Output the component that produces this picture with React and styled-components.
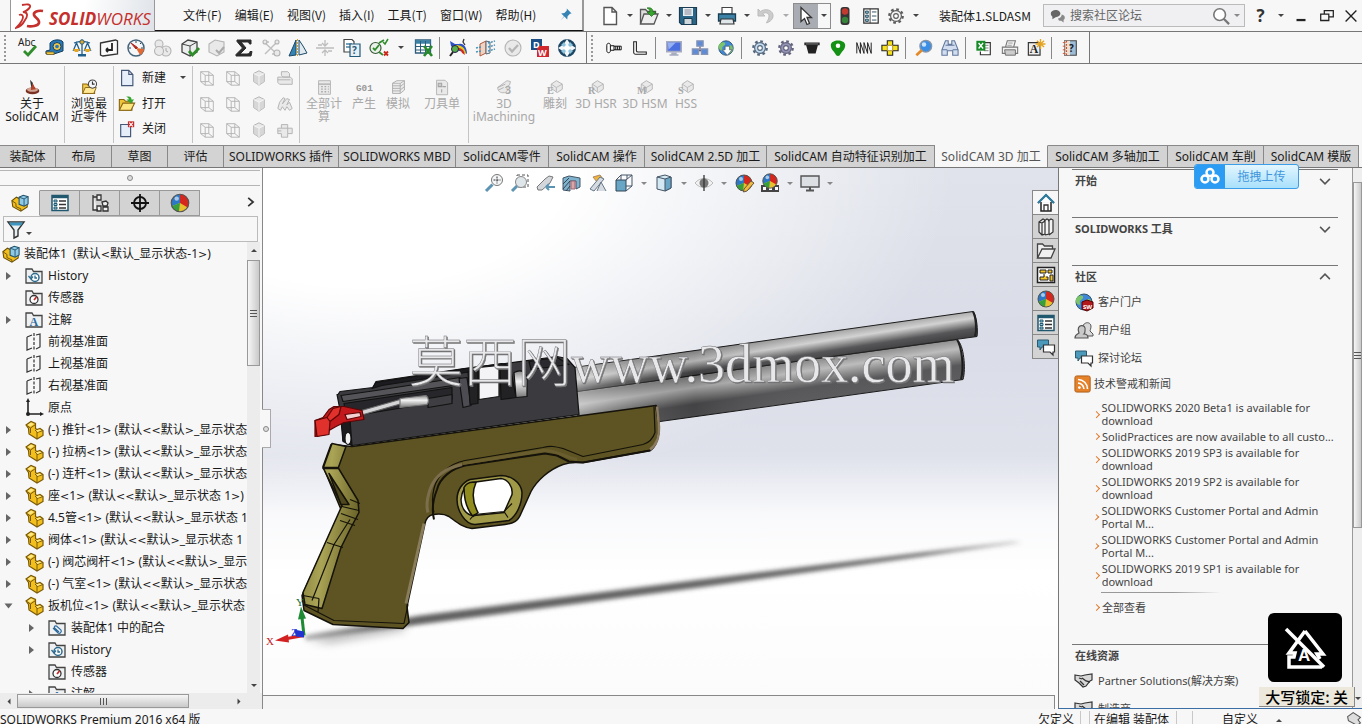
import React from 'react'
import styled, { createGlobalStyle } from 'styled-components'

const GlobalStyle = createGlobalStyle`
  * {
    box-sizing: border-box;
  }
  body {
    margin: 0;
    overflow: hidden;
    background: #f7f7f7;
    color: #1a1a1a;
    font: 12px/16px "Noto Sans", "Noto Sans CJK SC", sans-serif;
  }
  button, input {
    font: inherit;
    color: inherit;
    padding: 0;
    margin: 0;
    border: 0;
    background: none;
  }
  a {
    color: inherit;
    text-decoration: none;
  }
  ul {
    list-style: none;
    margin: 0;
    padding: 0;
  }
`

/* ---------- icons, all on a 20 x 20 grid ---------- */

const line = { fill: 'none', stroke: '#333', strokeWidth: 1.3 }
const grey = { fill: '#e9e9e9', stroke: '#b4b4b4', strokeWidth: 1.1 }

const ball = <>
  <circle cx="10" cy="10" r="8" fill="#e8bf2d" />
  <path d="M10 10V2a8 8 0 0 1 7 12Z" fill="#d4281e" />
  <path d="M10 10V2a8 8 0 0 0-7.500 11Z" fill="#2d78c4" />
  <path d="M10 10l-7.500 3A8 8 0 0 0 9 18Z" fill="#35a03c" />
  <circle cx="10" cy="10" r="8" fill="none" stroke="#555" />
  <circle cx="7" cy="6" r="2" fill="#fff" opacity=".6" />
</>

const folder = <path d="M2 17V3h6l1.500 2.500H18V17Z" fill="#eef0f1" stroke="#444" strokeWidth="1.300" />

const wireCube = <>
  <path d="M3 3h9v11H3ZM8 7h9v11H8ZM3 3l5 4M12 3l5 4M3 14l5 4M12 14l5 4" fill="none" stroke="#b0b0b0" />
</>

const solidCube = <>
  <path d="M10 2l6 3v9l-6 4-6-4V5Z" {...grey} />
  <path d="M4 5l6 3 6-3v9l-6 4-6-4Z" fill="#cfcfcf" opacity=".7" />
  <path d="M10 8v10M4 5l6 3 6-3" fill="none" stroke="#f7f7f7" />
</>

const part = <>
  <path d="M2 5l5-3.500 4.500 2v5l1.500 1 3-1 3 2v5l-6 3.500-8-5-.5-5.500Z" fill="#f2bf1c" stroke="#7a5a08" strokeWidth="1.200" />
  <path d="M2 5l4.500 3V13M6.500 8l5-3.500M11 10l2 2v6.500M13 12.500l6-2" fill="none" stroke="#7a5a08" />
  <path d="M3.500 5L7 2.500l3 1.500-3.500 2.500ZM12 10.500l3.500-1 2 1-4 1.500Z" fill="#ffe784" />
</>

const assembly = <>
  <path d="M1 7.500l5-4 4 2v5h8v4l-7 4.500-9-5Z" fill="#f2bf1c" stroke="#6b4f06" strokeWidth="1.200" />
  <path d="M1 7.500l4.500 3V14l5.500 2.500V19" fill="none" stroke="#6b4f06" />
  <path d="M9 3.500l4.500-2 5.500 1.500v8l-4.500 2.500-5.500-2Z" fill="#8ec9e6" stroke="#24536d" strokeWidth="1.200" />
  <path d="M9 3.500l5.500 2v8M14.500 5.500L19 3" fill="none" stroke="#24536d" />
</>

const chat = <>
  <path d="M1.500 3h11v7H6l-2 3v-3H1.500Z" fill="#4b9abb" stroke="#2b5b70" />
  <path d="M7.500 8h11v7H17v3l-3-3H7.500Z" fill="#fff" stroke="#333" strokeWidth="1.200" />
</>

const list = <>
  <path d="M2 2.500h16v15H2Z" fill="#fff" stroke="#20586f" strokeWidth="1.500" />
  <path d="M2 4h16" stroke="#20586f" strokeWidth="2.500" />
  <path d="M4 7h3v2H4ZM4 10.500h3v2H4ZM4 14h3v2H4Z" fill="#9bd0e3" stroke="#20586f" />
  <path d="M9 8h7M9 11.500h7M9 15h7" stroke="#333" strokeWidth="1.300" />
</>

const globe = <>
  <circle cx="10" cy="10" r="8" fill="#3f87d9" stroke="#356" />
  <path d="M5 4c3-1 5 0 4 2s-4 2-3 5-3 2-4-1 1-5 3-6ZM12 8c3-2 5-1 5.500 2s-2 6-4 6-2-3-3-4 0-3 1.500-4Z" fill="#7cc46b" />
</>

const handshake = <>
  <path d="M1 4l6 1 4-1 7-1v6l-2 1-4 5-3 1-4-4-4-3Z" fill="#d8d8d8" stroke="#333" strokeWidth="1.200" />
  <path d="M8 7l4 3 4 1M6 10l4 4M8 8L5 7" {...line} />
</>

const cog = (color, fill) => <>
  <circle cx="10" cy="10" r="7.500" fill="none" stroke={color} strokeWidth="2.500" strokeDasharray="3 2.890" />
  <circle cx="10" cy="10" r="6" fill={fill} stroke={color} strokeWidth="1.300" />
  <circle cx="10" cy="10" r="2.600" fill="#fff" stroke={color} strokeWidth="1.200" />
</>

const camOp = (letter) => <>
  <path d="M5 6l6-4 7 4v6l-6 4-4-3-3-1Z" {...grey} />
  <path d="M5 6l6 4 7-4M11 10v5" fill="none" stroke="#b4b4b4" />
  <text x="0" y="18" fontSize="12" fontWeight="bold" fontFamily="Liberation Serif" fill="#a8a8a8">{letter}</text>
</>

const icons = {
  part, assembly, chat, list, ball, wireCube, solidCube, globe, handshake,
  pin: <path d="M11 2l6 6-2 .5-3 3-.5 4-3.500-3.500L3 17l4.500-5.500L4 8l4-.5 3-3Z" fill="#3683b5" />,
  newDoc: <path d="M4 1.500h8l4.500 4.500v12.500H4ZM12 1.500V6h4.500" fill="#fff" stroke="#555" strokeWidth="1.400" />,
  openDoc: <>
    <path d="M1.500 18V3.500h5l2 2h8V9" fill="#ddd" stroke="#555" strokeWidth="1.300" />
    <path d="M1.500 18L5 8h14l-4 10Z" fill="#eee" stroke="#555" strokeWidth="1.300" />
    <path d="M8 2c4-1 6 1 6 4h3l-4.500 4.500L8 6h3c0-2-1-3-3-4Z" fill="#38a52f" stroke="#1f6d1a" strokeWidth=".7" />
  </>,
  save: <>
    <path d="M1.500 1.500h17v17h-15l-2-2Z" fill="#2b6688" stroke="#1b3d52" strokeWidth="1.200" />
    <path d="M5 2h10v8H5Z" fill="#e9eef1" />
    <path d="M6.500 4h7M6.500 6h7M6.500 8h7" stroke="#889" />
    <path d="M6 12.500h8v6H6Z" fill="#cfd8dd" stroke="#1b3d52" />
  </>,
  print: <>
    <path d="M5 1.500h10V8H5Z" fill="#fff" stroke="#444" strokeWidth="1.200" />
    <path d="M1.500 8h17v7h-17Z" fill="#3c82a6" stroke="#1b3d52" strokeWidth="1.300" />
    <path d="M4 13h12l1 5H3Z" fill="#dfe7eb" stroke="#333" strokeWidth="1.200" />
  </>,
  undo: <path d="M2 3v7h7l-2.500-2.500c4-2 8 0 6 5.500-1 2-2 3-2 4 6-2 8-7 5.500-10.500S8 3 4.500 5.500Z" fill="#ccc" stroke="#bbb" />,
  cursor: <path d="M5 1.500v14l3.500-3 2.500 6 2.500-1-2.500-6H15.500Z" fill="#fff" stroke="#333" strokeWidth="1.300" />,
  traffic: <>
    <rect x="5.500" y="1" width="9" height="18" rx="3" fill="#353535" />
    <circle cx="10" cy="5.500" r="3.200" fill="#c33a30" />
    <circle cx="10" cy="14" r="3.200" fill="#35843a" />
  </>,
  options: <>
    <path d="M2 2h16v16H2Z" fill="#fff" stroke="#333" strokeWidth="1.400" />
    <path d="M9 2v16" stroke="#333" />
    <path d="M4 4.500h3v2.500H4ZM4 9h3v2.500H4ZM4 13.500h3V16H4ZM11 5.500h5M11 10h5M11 14.500h5" fill="#8ec8de" stroke="#245" />
  </>,
  gear: cog('#5b5b5b', '#f4f4f4'),
  blueGear: cog('#55677d', '#c3dcf0'),
  darkGear: cog('#63637e', '#9494b4'),
  help: <text x="4" y="18" fontSize="20" fontWeight="bold" fill="#333" fontFamily="Open Sans">?</text>,
  minimize: <path d="M5 14.500h10" stroke="#222" strokeWidth="2.500" />,
  restore: <path d="M3 8h9v7H3ZM7 8V4h10v7h-5" fill="none" stroke="#222" strokeWidth="1.400" />,
  close: <path d="M4 4l12 12M16 4L4 16" stroke="#222" strokeWidth="1.500" />,
  search: <>
    <circle cx="8.500" cy="8.500" r="6.500" fill="#fff" stroke="#777" strokeWidth="1.800" />
    <path d="M13 13l6 6" stroke="#777" strokeWidth="2.500" />
  </>,
  bubbles: <>
    <path d="M1 7c0-3 3-4.500 6-4.500s6 2 6 4.500-3 4.500-6 4.500L3 14v-3C2 10 1 9 1 7Z" fill="#666" />
    <path d="M10 13c3-.5 5-3 4.500-5 3 .5 4 2 4 4s-1 2.500-1.500 3v3l-3-2c-2 .3-3.500-.5-4-3Z" fill="#888" />
  </>,
  spell: <>
    <text x="0" y="8" fontSize="10" fill="#222" fontFamily="Noto Sans">Abc</text>
    <path d="M6 13l4 4 8-9" fill="none" stroke="#2f8d2b" strokeWidth="2.800" />
  </>,
  tape: <>
    <path d="M5 5c3-4 11-4 13-1v9l-9 3H1v-3l4-1Z" fill="#2878b8" stroke="#17405f" />
    <circle cx="12" cy="8.500" r="4" fill="#f1c94b" stroke="#17405f" />
    <circle cx="12" cy="8.500" r="1.800" fill="#2878b8" />
    <path d="M1 14h8v2.500H2Z" fill="#f1c94b" stroke="#6b5310" strokeWidth=".7" />
  </>,
  scales: <>
    <path d="M10 1.500V16M2 5c5-2 11-2 16 0M4.500 5l-3 7h6ZM15.500 5l-3 7h6Z" fill="none" stroke="#1f5f8c" strokeWidth="1.300" />
    <path d="M1 11h7l-2 3H3ZM12 11h7l-2 3h-3Z" fill="#e4a623" />
    <path d="M6 16h8v2.500H6Z" fill="#1f5f8c" />
    <circle cx="10" cy="4" r="2.200" fill="#e4a623" stroke="#1f5f8c" />
  </>,
  section: <>
    <path d="M1.500 5l15-3 2 1v13L4 18l-2.500-1Z" fill="#fafafa" stroke="#333" strokeWidth="1.300" />
    <path d="M13 5v7H7m0 0l2-2M7 12l2 2" fill="none" stroke="#222" strokeWidth="1.800" />
  </>,
  gauge: <>
    <circle cx="10" cy="10" r="8" fill="#f4f6f8" stroke="#44637a" strokeWidth="1.500" />
    <path d="M10 10l4 7A8 8 0 0 0 18 11Z" fill="#e06a32" />
    <path d="M5 5l5 6 1.500-1.500Z" fill="#b3261c" stroke="#b3261c" />
    <path d="M10 3v2M3 10h2M15 10h2M15 5l-1 1" stroke="#345" />
  </>,
  dimGears: <>
    <circle cx="6" cy="6" r="4" {...grey} /><circle cx="13" cy="13" r="5" {...grey} />
    <circle cx="6" cy="13" r="4.500" {...grey} /><path d="M13 10v3l2 1" fill="none" stroke="#aaa" />
  </>,
  boxCheck: <>
    <path d="M2 6l6-4 9 2v10l-7 4-8-4Z" fill="#eceded" stroke="#444" strokeWidth="1.300" />
    <path d="M2 6l8 2 7-4M10 8v10" fill="none" stroke="#444" />
    <path d="M9 13l3.500 4L19 10" fill="none" stroke="#2f8d2b" strokeWidth="2.800" />
  </>,
  dimCheck: <>
    <path d="M2 6l6-4 9 2v10l-7 4-8-4Z" {...grey} />
    <path d="M9 12l3 3 5-6" fill="none" stroke="#aaa" strokeWidth="2" />
  </>,
  sigma: <path d="M3 2h14v4h-1.500c-.5-1.500-1-2-3-2H7l5 6-6 6h7c2 0 2.500-1 3-2.500H18L17 18H2v-1.500L8.500 10 3 3.500Z" fill="#2b2b2b" stroke="#2b2b2b" />,
  dimNodes: <>
    <path d="M3 4l13 12M16 4L4 16M3 4h5M16 16h-5" fill="none" stroke="#c0c0c0" strokeWidth="1.500" />
    <circle cx="4" cy="4" r="2" {...grey} /><circle cx="16" cy="4" r="2" {...grey} /><circle cx="16" cy="15" r="3" {...grey} />
  </>,
  mirror: <>
    <path d="M8 2v15l-7 1 4-9Z" fill="#3583b3" stroke="#1c4a68" />
    <path d="M11 2v15l8-2-4-7Z" fill="#dfe9ee" stroke="#1c4a68" />
    <path d="M9.500 1v18" stroke="#e0a020" strokeDasharray="2 1" />
  </>,
  dimAlign: <path d="M1 10h18M10 2v5M10 13v5M7 5l3 3 3-3M7 15l3-3 3 3M3 7h4M13 13h4" fill="none" stroke="#bdbdbd" strokeWidth="1.300" />,
  docCompare: <>
    <path d="M2 1.500h8l2 2V14H2Z" fill="#fff" stroke="#444" strokeWidth="1.200" />
    <path d="M4 6h6M4 9h6" stroke="#4c84a7" strokeWidth="1.500" />
    <path d="M8 6h10v12.500H8Z" fill="#e6eff4" stroke="#245a7a" strokeWidth="1.200" />
    <text x="10" y="16" fontSize="10" fontWeight="bold" fill="#245a7a">?</text>
  </>,
  network: <>
    <circle cx="6.500" cy="10" r="5.500" fill="#eaf2ea" stroke="#3b5a3b" strokeWidth="1.200" />
    <path d="M4 10l2 2 4-5M10 5l5-3M10 14l4 3" fill="none" stroke="#2f8d2b" strokeWidth="1.800" />
    <path d="M14 4l2 2 3-5" fill="none" stroke="#2f8d2b" strokeWidth="1.500" />
    <path d="M15 13.500l4 4M19 13.500l-4 4" stroke="#c9281c" strokeWidth="1.800" />
  </>,
  tableX: <>
    <path d="M1.500 2h15v13h-15Z" fill="#fff" stroke="#2c5d7d" strokeWidth="1.300" />
    <path d="M1.500 4h15" stroke="#3c82a6" strokeWidth="3.500" />
    <path d="M1.500 8.500h15M1.500 12h15M6.500 3v12M11.500 3v12" stroke="#2c5d7d" />
    <path d="M10 8l8 10M18 8l-8 10" stroke="#25892a" strokeWidth="2.600" />
  </>,
  rainbow: <>
    <path d="M1 3l5 3h4c5-1 8 4 8 10l-3-2-9-2-4-4Z" fill="#2d51c4" />
    <path d="M6 7c6 0 10 2 11 9l-3-2c-1-3-4-4-7-4Z" fill="#e4c81c" />
    <path d="M9 10c4 0 6 2 7 7l-3-2c-1-3-2-3-5-3Z" fill="#d4281e" />
    <path d="M15 1l-1 3 2 3" {...line} />
    <circle cx="6" cy="11" r="3.500" fill="#57ae4c" stroke="#224" /><path d="M4 14l-3 4" stroke="#222" strokeWidth="2" />
  </>,
  flow: <>
    <path d="M4 6l6-3v12l-6 3Z" fill="#f1d3c4" stroke="#b0583a" />
    <path d="M10 3l4 1v11l-4 1Z" fill="#e8ecef" stroke="#567" />
    <path d="M12 5l7-2M12 9l7-2M12 13l7-2M0 10l5-1M0 14l5-1" stroke="#4b93b5" strokeWidth="1.500" strokeDasharray="2 1" />
  </>,
  dimTick: <>
    <circle cx="10" cy="10" r="8" {...grey} />
    <path d="M6 10l3 3.500L15 7" fill="none" stroke="#b5b5b5" strokeWidth="2.200" />
  </>,
  dw: <>
    <path d="M1 1h11v11H1Z" fill="#1d4f86" />
    <path d="M7 8h12v11H7Z" fill="#d1282f" />
    <text x="3" y="9.500" fontSize="9" fontWeight="bold" fill="#fff">D</text>
    <text x="8" y="17.500" fontSize="9" fontWeight="bold" fill="#fff">W</text>
  </>,
  ring: <>
    <circle cx="10" cy="10" r="6.500" fill="#fff" stroke="#1d4663" strokeWidth="5" />
    <path d="M4 7l3-3 2 3-2 2ZM16 7l-3-3-2 3 2 2ZM4 13l3 3 2-3-2-2ZM16 13l-3 3-2-3 2-2Z" fill="#8cc3de" />
    <path d="M10 1l2.500 4L10 8 7.500 5ZM10 19l2.500-4L10 12l-2.500 3ZM1 10l4-2.500L8 10l-3 2.500ZM19 10l-4-2.500L12 10l3 2.500Z" fill="#f4f8fa" />
  </>,
  bolt: <path d="M2 7c0-3 4-3 4 0v6c0 3-4 3-4 0ZM6 7.500h4v5H6M10 8h8v4h-8M12 8v4M14 8v4M16 8v4" fill="#fff" stroke="#111" strokeWidth="1.100" />,
  corner: <path d="M3 3h3v10c0 1 1 1.500 2 1.500h9V17H5c-1 0-2-1-2-2Z" fill="#fff" stroke="#222" strokeWidth="1.200" />,
  monitor: <>
    <path d="M2 3h16v11H2Z" fill="#4c6fe0" stroke="#a6abc0" strokeWidth="1.800" />
    <path d="M3 4h9l-8 8Z" fill="#96b0f2" /><path d="M7 15h6v2h2v1.500H5V17h2Z" fill="#a6abc0" />
  </>,
  pcs: <>
    <path d="M10 8v5M5 13h10" stroke="#446" strokeWidth="1.200" />
    <path d="M6.500 2h7v6h-7ZM1.500 11h7v6h-7ZM11.500 11h7v6h-7Z" fill="#5f8ad6" stroke="#8795b4" strokeWidth="1.400" />
  </>,
  globeDown: <>{globe}<path d="M9 8h5v4h3l-5.500 6L6 12h3Z" fill="#fff" stroke="#456" strokeWidth=".8" /></>,
  bucket: <><path d="M1.500 4h17v3h-2l-2.500 9H6L3.500 7h-2Z" fill="#222" /><path d="M3 5.500h14" stroke="#888" /></>,
  cam: <><path d="M2 7c0-7 16-7 16 0 0 5-4 7-6 11-1 1-3 1-4 0-2-4-6-6-6-11Z" fill="#159215" /><circle cx="10" cy="7.500" r="2.500" fill="#fff" /></>,
  spring: <path d="M2 16V4l4 12V4l4 12V4l4 12V4l4 12V4" fill="none" stroke="#222" strokeWidth="1.100" />,
  plus: <><path d="M7 2h6v5h6v6h-6v5H7v-5H1V7h6Z" fill="#f6e21c" stroke="#222" strokeWidth="1.200" /><path d="M7 7h6v6H7Z" fill="#fff" stroke="#a5861c" /></>,
  lens: <><circle cx="12" cy="8" r="6.500" fill="#3c8ee4" stroke="#8895a5" strokeWidth="1.500" /><circle cx="10" cy="6" r="2.500" fill="#c8e4ff" /><path d="M7.500 12.500L1.500 18" stroke="#e38a28" strokeWidth="3" /></>,
  binoculars: <path d="M5 2h3v4h4V2h3l4 10v6h-6v-5H7v5H1v-6ZM5 7h10M1 12h6M13 12h6" fill="#d2deef" stroke="#61779c" strokeWidth="1.200" />,
  excel: <>
    <path d="M8 4h9v13.500H6V14" fill="#fff" stroke="#333" strokeWidth="1.300" />
    <path d="M10 7h5M10 10h5M10 13h5" stroke="#777" />
    <path d="M1.500 2h10v11h-10Z" fill="#178b27" /><path d="M4 4.500l5 6M9 4.500l-5 6" stroke="#fff" strokeWidth="1.500" />
  </>,
  printer: <>
    <path d="M5 9l2-7h9l-2 7M1.500 9h17v7h-17Z" fill="#f2f2f2" stroke="#777" strokeWidth="1.200" />
    <path d="M4 12h12v6H5Z" fill="#ccc" stroke="#666" /><path d="M8 4.500h5M7 7h5" stroke="#999" />
  </>,
  noteStar: <>
    <path d="M1.500 4h13v14h-13Z" fill="#eee" stroke="#333" strokeWidth="1.300" />
    <text x="3" y="16" fontSize="13" fontWeight="bold" fontFamily="Liberation Serif" fill="#222">A</text>
    <path d="M15 0v11M9.500 5.500h11M11 2l8 7M19 2l-8 7" stroke="#e4a420" strokeWidth="1.500" />
  </>,
  helpBook: <>
    <path d="M4 2h13v16H4Z" fill="#9fbcd6" stroke="#444" strokeWidth="1.200" />
    <path d="M4 2h6v16H4Z" fill="#eee1d7" /><path d="M6 2v16" stroke="#c94f2c" strokeWidth="1.500" strokeDasharray="2 1.500" />
    <text x="9" y="14" fontSize="11" fontWeight="bold" fill="#1a1a1a">?</text><path d="M2 4h3M2 8h3M2 12h3M2 16h3" stroke="#c94f2c" />
  </>,
  stamp: <>
    <ellipse cx="10" cy="14" rx="8" ry="4" fill="#7a2f20" /><ellipse cx="10" cy="12.500" rx="6.500" ry="2.500" fill="#d1a594" />
    <path d="M7 1l3 3 2 6-3 2Z" fill="#333" /><path d="M10 5l4 7-6 1Z" fill="#b3402a" />
  </>,
  recent: <>
    <path d="M2 17V6h5l2 2h7v9Z" fill="#f3cb4a" stroke="#8a6612" strokeWidth="1.200" />
    <path d="M2 17l3-7h13l-3 7Z" fill="#ffe794" stroke="#8a6612" strokeWidth="1.100" />
    <circle cx="13.500" cy="6" r="4.800" fill="#f4f6fa" stroke="#444" strokeWidth="1.200" /><path d="M13.500 3v3h2.500" {...line} />
  </>,
  page: <path d="M4 1.500h8l4.500 4.500v12.500H4ZM12 1.500V6h4.500" fill="#e6eefa" stroke="#46587a" strokeWidth="1.300" />,
  openYellow: <>
    <path d="M1.500 17V5h5l2 2h7v10Z" fill="#f0c437" stroke="#866512" strokeWidth="1.200" />
    <path d="M1.500 17l4-8h13l-4 8Z" fill="#ffe580" stroke="#866512" strokeWidth="1.200" />
    <path d="M9 2c4-1 6 0 6 3h3l-4 4.500L9.500 5H12c0-1.500-1-2-3-3Z" fill="#35a52f" />
  </>,
  closeDoc: <>
    <path d="M3 5h11v13.500H3Z" fill="#e6eefa" stroke="#46587a" strokeWidth="1.300" />
    <path d="M11 1.500h7V8h-7Z" fill="#c22b2b" /><path d="M12.500 3l4 4M16.500 3l-4 4" stroke="#fff" strokeWidth="1.300" />
  </>,
  calc: <><path d="M3 2h14v16H3Z" {...grey} /><path d="M3 6h14M6 9h2M10 9h2M14 9h1M6 12h2M10 12h2M14 12h1M6 15h2M10 15h2M14 15h1" stroke="#aaa" strokeWidth="1.500" /></>,
  g01: <text x="0" y="14" fontSize="11" fontWeight="bold" fontFamily="Liberation Mono" fill="#999">G01</text>,
  simulate: <path d="M3 5l5-3h9v11l-5 4H3ZM3 5h9l5-3M12 5v12M3 8h9M3 11h9M3 14h9M12 9l5-4M12 13l5-4" fill="#ececec" stroke="#a8a8a8" />,
  toolSheet: <><path d="M3 1.500h10l3 3v14H3Z" {...grey} /><path d="M5 5h4v4H5ZM10 9h4M9 12v4" fill="#ccc" stroke="#a5a5a5" strokeWidth="1.300" /></>,
  iMach: <>
    <path d="M2 10l8-6 3-2 4 1-1 4-5 3c3 0 4 5-1 6s-8-2-8-6Z" {...grey} />
    <path d="M2 10l9-4M3 13l6-3" stroke="#aaa" />
    <text x="11" y="18" fontSize="12" fontWeight="bold" fill="#aaa">3</text>
  </>,
  camE: camOp('E'), camR: camOp('R'), camM: camOp('M'), camS: camOp('S'),
  dimStack: <path d="M6 3h7l2 2v4H8L6 7ZM2 9h14l2 2v6H4l-2-2ZM2 12h14" {...grey} />,
  dimFins: <path d="M2 15l2-7 4-5 2 1-3 6 5-6 3 1-3 6 3-3 3 7-3 2-3-4-2 4-3-4-2 4Z" {...grey} />,
  dimPlus: <path d="M6 4h7v4h5v6h-5v4H6v-4H2V8h4ZM6 8h7v6M2 11h4" {...grey} />,
  treeConfig: <>
    <path d="M3 2v15h5M3 4h4M7 2h4v5H7ZM7 13h4v5H7ZM12 9l4-1 2 2-1 3-4 0ZM13 14h5v4h-5Z" fill="#eee" stroke="#333" strokeWidth="1.300" />
  </>,
  target: <><circle cx="10" cy="10" r="6" fill="none" stroke="#111" strokeWidth="1.800" /><path d="M10 1v18M1 10h18" stroke="#111" strokeWidth="1.800" /></>,
  funnel: <><path d="M2 3h16l-6 8v6l-4 2v-8Z" fill="#e8f0f4" stroke="#333" strokeWidth="1.400" /><path d="M3 3.500h14l-2 3H5Z" fill="#3e95bd" /></>,
  history: <>{folder}<circle cx="11" cy="11.500" r="4" fill="#fff" stroke="#2d6b8e" strokeWidth="1.500" /><path d="M11 9.500v2.500h2M4.500 10l2.500 3 2-2.500" fill="none" stroke="#2d6b8e" strokeWidth="1.300" /></>,
  sensor: <>{folder}<circle cx="10" cy="11.500" r="4" fill="#fff" stroke="#333" strokeWidth="1.300" /><path d="M10 12l2.500-3" stroke="#c22b2b" strokeWidth="1.800" /></>,
  notes: <>{folder}<text x="5.500" y="16" fontSize="12" fontWeight="bold" fontFamily="Liberation Serif" fill="#2d6b9e">A</text></>,
  mates: <>{folder}<path d="M6 10l5 5c2 1 4-1 3-3L9.500 8c-1.500-.5-2.500.5-2 2l4.500 4" fill="none" stroke="#2d6b9e" strokeWidth="1.200" /></>,
  plane: <><path d="M3 5l5-2M3 5v13l5-2M12 3l4-1v13l-4 2" fill="none" stroke="#333" strokeWidth="1.200" /><path d="M10 1v18" stroke="#333" strokeWidth="1.200" strokeDasharray="3 1.500" /></>,
  origin: <><path d="M4 3v13h13" fill="none" stroke="#222" strokeWidth="1.600" /><path d="M4 0l2 4h-4ZM20 16l-4-2v4Z" fill="#222" /><circle cx="4" cy="16" r="2" fill="#222" /></>,
  zoomFit: <><circle cx="13" cy="7" r="5.500" fill="#f4f6f8" stroke="#777" /><path d="M13 3.500v7M9.500 7h7" stroke="#333" strokeDasharray="2 1" /><path d="M8.500 11.500L2 18" stroke="#5d94b3" strokeWidth="3" /></>,
  zoomArea: <><path d="M7 2h11v12H7Z" fill="none" stroke="#555" strokeDasharray="3 2" /><circle cx="11" cy="9" r="5.500" fill="#dfe6ea" stroke="#888" /><path d="M7 13l-5 5" stroke="#5d94b3" strokeWidth="3" /></>,
  prevView: <><path d="M1 14l8-8 4-3 4 1-3 6-8 7-4 0Z" fill="#d3d6da" stroke="#777" /><path d="M10 14h9M10 14l3-3M10 14l3 3" stroke="#5b94b3" strokeWidth="2" fill="none" /></>,
  sectionView: <><path d="M1 5l6-2 11 2v9l-4 2V8H8v10l-7-1Z" fill="#7fb3cd" stroke="#456" /><path d="M1 11l6-6M1 16l7-8M4 18l4-5" stroke="#345" /><path d="M9 8h4v8H9Z" fill="#dba5a8" stroke="#967" /></>,
  sketchView: <><path d="M5 4l7-2 3 4-6 3Z" fill="#f1b43a" stroke="#a86" /><path d="M2 16L12 4l4 2L6 18ZM9 18l4-9 5 9" fill="#d5dbe0" stroke="#678" /></>,
  orient: <><path d="M2 7h10v11H2Z" fill="#69a6c6" stroke="#345" /><path d="M2 7l5-5h11v11l-6 5M12 7l6-5M7 2v5M12 13h6M13 2v4" fill="none" stroke="#456" /></>,
  display: <><path d="M3 4l8-2 6 2v11l-6 3-8-2Z" fill="#d3e8f2" stroke="#456" /><path d="M11 6v12l6-3V4Z" fill="#69a6c6" stroke="#456" /><path d="M3 4l8 2" stroke="#456" /></>,
  eye: <><path d="M1 10c5-6 13-6 18 0-5 6-13 6-18 0Z" fill="#f2f2f2" stroke="#bbb" /><circle cx="10" cy="10" r="4.500" fill="#777" /><path d="M10 2v16" stroke="#333" strokeWidth="1.300" /></>,
  paint: <>{ball}<path d="M10 16l7-8 3 2-7 8-3.500 1Z" fill="#f0ba3a" stroke="#654" /></>,
  scene: <><path d="M1 12h18v7H1Z" fill="#444" /><path d="M3 14h3v3H3ZM9 14h3v3H9ZM15 14h3v3h-3Z" fill="#fff" /><g transform="translate(1 -1) scale(.9)">{ball}</g></>,
  screen: <><path d="M1 3h18v11H1Z" fill="#dcdfe4" stroke="#555" strokeWidth="1.400" /><path d="M10 14v3M6 17.500h8" stroke="#555" strokeWidth="2" /></>,
  home: <><path d="M2 10l8-8 8 8M5 9v9h10V9" fill="#fff" stroke="#222" strokeWidth="1.500" /><path d="M2 10l8-8 8 8" fill="none" stroke="#2f7d9e" strokeWidth="2.200" /><path d="M8 18v-6h4v6" {...line} /></>,
  books: <path d="M3 5l4-3 2 1v14l-3 1-3-3ZM8 4l3-2 2 1v14l-4 1M12 4l3-2 2 1v12l-4 3M6 6v12M9 5v12M3 5l3 1 3-2M13 5v12" fill="#f2f2f2" stroke="#333" strokeWidth="1.200" />,
  folderOpen: <path d="M1.500 17V3h5l2 2h8v3M1.500 17L6 8h13l-4 9Z" fill="#f0f0f0" stroke="#444" strokeWidth="1.300" />,
  palette: <><path d="M1.500 2.500h17v15h-17Z" fill="#fff" stroke="#222" strokeWidth="1.500" /><path d="M4 5h6v3H4ZM12 5h4v3h-4ZM8 9v3H4v3h8v-3h-2M14 10h3v6h-3Z" fill="#f5c425" stroke="#222" /></>,
  portal: <>{globe}<path d="M8 10l5-2 6 2v6l-6 3-5-2Z" fill="#b3181c" stroke="#500" /><text x="9" y="17" fontSize="6" fontWeight="bold" fill="#fff">SW</text></>,
  people: <><path d="M9 9c-2-6 7-9 8-3 0 3-1 4-1 5l3 3v2h-8" fill="#d8d8d8" stroke="#555" /><path d="M1 18c0-4 3-4 4-5-4-9 8-10 6-2 0 1 0 2-1 3 2 0 4 1 4 4Z" fill="#c8c8c8" stroke="#555" strokeWidth="1.200" /></>,
  rss: <><rect x="1" y="1" width="17" height="18" rx="2" fill="#e5822a" stroke="#a95a17" /><circle cx="6" cy="14" r="1.500" fill="#fff" /><path d="M4.500 9a6.500 6.500 0 0 1 6.500 6.500M4.500 5a10.500 10.500 0 0 1 10.500 10.500" fill="none" stroke="#fff" strokeWidth="1.800" /></>,
  tag: <path d="M2 7l7-5 9 6-3 3 3 4-4 3-11-6Z" fill="#ddd" stroke="#555" strokeWidth="1.300" />,
}

const Glyph = styled.svg`
  display: block;
  flex: none;
  width: ${(p) => p.$size || 18}px;
  height: ${(p) => p.$size || 18}px;
  overflow: visible;
`

const Icon = ({ name, size }) => (
  <Glyph viewBox="0 0 20 20" $size={size} aria-hidden="true">{icons[name]}</Glyph>
)

const Caret = styled.span`
  display: block;
  flex: none;
  border: 3px solid transparent;
  border-top-color: ${(p) => p.$color || '#444'};
  border-bottom-width: 0;
`

/* ---------- shell ---------- */

const Page = styled.div`
  display: flex;
  flex-direction: column;
  height: 100vh;
  overflow: hidden;
`

const IconButton = styled.button`
  display: flex;
  flex: none;
  align-items: center;
  justify-content: center;
  width: ${(p) => p.$width || 24}px;
  height: 24px;
`

/* ---------- title bar ---------- */

const TitleBar = styled.header`
  display: flex;
  flex: none;
  align-items: center;
  height: 32px;
  padding-left: 10px;
  border-bottom: 1px solid #777;
`

const Brand = styled.div`
  display: flex;
  align-items: center;
  align-self: stretch;
  width: 145px;
  padding-left: 4px;
  gap: 4px;
  border: solid #999;
  border-width: 0 1px;
  background: linear-gradient(100deg, #fff 50%, #dfe3e8);
  color: #c5302c;
  font: italic 17px/20px "Open Sans", sans-serif;

  svg {
    flex: none;
    width: 30px;
    height: 28px;
  }
  span {
    padding-top: 6px;
  }
`

const MenuBar = styled.nav`
  display: flex;
  align-items: center;
  align-self: stretch;
  width: 429px;
  padding-left: 28px;
  gap: 13px;
  border-right: 2px solid #999;
  border-bottom: 1px solid #111;
  font-family: "Noto Sans CJK SC", sans-serif;

  ${IconButton} {
    margin: 0 auto;
  }
`

const QuickBar = styled.div`
  display: flex;
  align-items: center;
  padding-left: 14px;
`

const SelectTool = styled.div`
  display: flex;
  align-items: center;
  height: 26px;
  margin: 0 1px 0 0;
  border: 1px solid #8c8c8c;

  ${IconButton}:first-child {
    background: #a9adb3;
  }
`

const FileName = styled.h1`
  margin: 0;
  padding-left: 16px;
  font: 12px/16px "Noto Sans CJK SC", sans-serif;
`

const WindowTools = styled.div`
  display: flex;
  align-items: center;
  margin-left: auto;
`

const SearchBox = styled.form`
  display: flex;
  align-items: center;
  width: 202px;
  height: 23px;
  padding: 0 4px 0 6px;
  margin-right: 4px;
  gap: 4px;
  border: 1px solid #bbb;
  background: #f0f0f2;

  input {
    flex: 1;
    min-width: 0;
    outline: 0;
  }
  input::placeholder {
    color: #666;
    opacity: 1;
  }
`

const quick = [
  ['newDoc', '新建'], ['openDoc', '打开'], ['save', '保存'], ['print', '打印'], ['undo', '撤消'],
]

const TitleRow = () => (
  <TitleBar>
    <Brand>
      <svg viewBox="0 0 30 28" aria-hidden="true">
        <path d="M7 3c5-1 9-1 8 2-1 2-4 4-7 5 5 0 5 4 2 8-2 4-5 7-9 8 4-4 7-8 7-11 0-2-2-3-4-2" fill="none" stroke="#c5302c" strokeWidth="1.800" />
        <path d="M28 9c-5-1-10 1-9 4 1 3 6 4 5 8-1 3-8 4-12 3" fill="none" stroke="#c5302c" strokeWidth="2.600" />
      </svg>
      <span><b>SOLID</b>WORKS</span>
    </Brand>
    <MenuBar>
      {['文件(F)', '编辑(E)', '视图(V)', '插入(I)', '工具(T)', '窗口(W)', '帮助(H)'].map((m) => (
        <button key={m}>{m}</button>
      ))}
      <IconButton aria-label="固定菜单"><Icon name="pin" size={16} /></IconButton>
    </MenuBar>
    <QuickBar>
      {quick.map(([name, label]) => (
        <React.Fragment key={name}>
          <IconButton aria-label={label}><Icon name={name} size={20} /></IconButton>
          <IconButton $width={15} aria-label={label + '选项'}><Caret $color={name === 'undo' ? '#aaa' : '#444'} /></IconButton>
        </React.Fragment>
      ))}
      <SelectTool>
        <IconButton aria-label="选择"><Icon name="cursor" size={20} /></IconButton>
        <IconButton $width={12} aria-label="选择选项"><Caret /></IconButton>
      </SelectTool>
      <IconButton $width={26} aria-label="重建模型"><Icon name="traffic" size={20} /></IconButton>
      <IconButton $width={26} aria-label="文件属性"><Icon name="options" size={18} /></IconButton>
      <IconButton aria-label="选项"><Icon name="gear" size={18} /></IconButton>
      <IconButton $width={15} aria-label="更多选项"><Caret /></IconButton>
    </QuickBar>
    <FileName>装配体1.SLDASM</FileName>
    <WindowTools>
      <SearchBox>
        <Icon name="bubbles" size={16} />
        <input type="search" aria-label="搜索社区论坛" placeholder="搜索社区论坛" />
        <Icon name="search" size={18} />
        <Caret $color="#888" />
      </SearchBox>
      <IconButton aria-label="帮助"><Icon name="help" size={17} /></IconButton>
      <IconButton $width={15} aria-label="帮助选项"><Caret /></IconButton>
      <IconButton $width={26} aria-label="最小化"><Icon name="minimize" size={18} /></IconButton>
      <IconButton $width={26} aria-label="还原"><Icon name="restore" size={18} /></IconButton>
      <IconButton $width={22} aria-label="关闭"><Icon name="close" size={18} /></IconButton>
    </WindowTools>
  </TitleBar>
)

/* ---------- tool row ---------- */

const ToolRow = styled.div`
  display: flex;
  flex: none;
  height: 32px;
  border-bottom: 1px solid #777;
`

const ToolStrip = styled.div`
  display: flex;
  align-items: center;
  padding: 0 6px 0 4px;
  border-right: 1px solid #777;
`

const Grip = styled.span`
  width: 3px;
  height: 26px;
  margin-right: 7px;
  border-left: 2px dotted #999;
`

const Divider = styled.span`
  width: 1px;
  height: 22px;
  margin: 0 5px 0 2px;
  background: #888;
`

const stripOne = [
  'spell', 'tape', 'scales', 'section', 'gauge', 'dimGears', 'boxCheck', 'dimCheck', 'sigma', 'dimNodes',
  'mirror', 'dimAlign', 'docCompare', 'network', 'v', 'tableX', '|', 'rainbow', 'flow', 'dimTick', 'dw', 'ring',
]
const stripTwo = [
  'bolt', 'corner', '|', 'monitor', 'pcs', 'globeDown', '|', 'blueGear', 'darkGear', 'bucket', 'cam', 'spring',
  'plus', '|', 'lens', 'binoculars', '|', 'excel', 'printer', 'noteStar', '|', 'helpBook',
]

const Strip = ({ items, width, size }) => (
  <ToolStrip>
    <Grip />
    {items.map((name, i) => {
      if (name === '|') return <Divider key={i} />
      if (name === 'v') return <IconButton key={i} $width={18} aria-label="更多"><Caret /></IconButton>
      return <IconButton key={i} $width={width} aria-label={name}><Icon name={name} size={size} /></IconButton>
    })}
  </ToolStrip>
)

/* ---------- ribbon ---------- */

const Ribbon = styled.section`
  display: flex;
  flex: none;
  height: 81px;
  padding: 2px 0;
`

const Group = styled.div`
  display: flex;
  border-right: ${(p) => (p.$last ? 0 : 1)}px solid #c4c4c4;
`

const BigButton = styled.button`
  display: flex;
  flex-direction: column;
  align-items: center;
  width: ${(p) => p.$width}px;
  padding-top: 13px;
  gap: 1px;
  line-height: 13px;
  white-space: pre-line;
  color: ${(p) => (p.$dim ? '#a9a9a9' : '#1a1a1a')};
`

const FileGroup = styled(Group)`
  flex-direction: column;
  width: 79px;
  padding-left: 4px;
`

const FileButton = styled.button`
  display: flex;
  align-items: center;
  height: 26px;
  padding: 2px 6px 4px 0;
  gap: 6px;

  ${Caret} {
    margin-left: auto;
  }
`

const CubeGrid = styled(Group)`
  display: grid;
  grid-template-columns: repeat(4, 26px);
  grid-auto-rows: 26px;
  width: 107px;
  padding-left: 1px;

  ${IconButton} {
    width: 26px;
  }
`

const cubes = [
  'wireCube', 'wireCube', 'solidCube', 'dimStack',
  'wireCube', 'wireCube', 'solidCube', 'dimFins',
  'wireCube', 'wireCube', 'solidCube', 'dimPlus',
]
const jobs = [['全部计\n算', 'calc', 48], ['产生', 'g01', 32], ['模拟', 'simulate', 36], ['刀具单', 'toolSheet', 52]]
const machining = [
  ['3D\niMachining', 'iMach', 70], ['雕刻', 'camE', 32], ['3D HSR', 'camR', 50], ['3D HSM', 'camM', 48], ['HSS', 'camS', 34],
]

const Big = ({ item: [label, icon, width], dim }) => (
  <BigButton $width={width} $dim={dim} disabled={dim}>
    <Icon name={icon} size={17} />
    {label}
  </BigButton>
)

const RibbonRow = () => (
  <Ribbon>
    <Group><Big item={['关于\nSolidCAM', 'stamp', 64]} /></Group>
    <Group><Big item={['浏览最\n近零件', 'recent', 48]} /></Group>
    <FileGroup>
      <FileButton><Icon name="page" />新建<Caret /></FileButton>
      <FileButton><Icon name="openYellow" />打开</FileButton>
      <FileButton><Icon name="closeDoc" />关闭</FileButton>
    </FileGroup>
    <CubeGrid>
      {cubes.map((c, i) => <IconButton key={i} aria-label={'视图 ' + (i + 1)} disabled><Icon name={c} /></IconButton>)}
    </CubeGrid>
    <Group>{jobs.map((j) => <Big key={j[1]} item={j} dim />)}</Group>
    <Group $last>{machining.map((j) => <Big key={j[1]} item={j} dim />)}</Group>
  </Ribbon>
)

const TabBar = styled.nav`
  display: flex;
  flex: none;
  height: 23px;
  overflow: hidden;
  border-bottom: 1px solid #777;
`

const Tab = styled.button`
  flex: none;
  width: ${(p) => p.$width}px;
  border-top: 1px solid ${(p) => (p.$active ? '#f7f7f7' : '#888')};
  border-right: 1px solid #888;
  background: ${(p) => (p.$active ? '#f7f7f7' : '#d3d3d3')};
  color: ${(p) => (p.$active ? '#555' : '#1a1a1a')};
  white-space: nowrap;
`

const tabs = [
  ['装配体', 56], ['布局', 56], ['草图', 56], ['评估', 56], ['SOLIDWORKS 插件', 115], ['SOLIDWORKS MBD', 117],
  ['SolidCAM零件', 93], ['SolidCAM 操作', 96], ['SolidCAM 2.5D 加工', 122], ['SolidCAM 自动特征识别加工', 168],
  ['SolidCAM 3D 加工', 113], ['SolidCAM 多轴加工', 120], ['SolidCAM 车削', 96], ['SolidCAM 模版', 95],
]

/* ---------- feature tree ---------- */

const Main = styled.main`
  display: flex;
  flex: 1;
  min-height: 0;
`

const TreePanel = styled.aside`
  display: flex;
  flex: none;
  flex-direction: column;
  width: 263px;
  border-right: 1px solid #888;
`

const PanelHandle = styled.div`
  display: flex;
  align-items: center;
  justify-content: center;
  height: 16px;
  margin: 2px 2px 4px 0;
  border: solid #b5b5b5;
  border-width: 1px 0;
`

const Dot = styled.span`
  width: 6px;
  height: 6px;
  border: 1px solid #888;
  border-radius: 50%;
  background: #ddd;
`

const TreeTabs = styled.div`
  display: flex;
  height: 26px;
  padding-right: 5px;
`

const TreeTab = styled(IconButton)`
  width: 40px;
  height: 26px;
  border: 1px solid #999;
  border-width: 1px 1px 1px 0;
  background: #d3d3d3;

  &:first-child {
    border-color: #f7f7f7 #999 #f7f7f7 #f7f7f7;
    background: #f7f7f7;
  }
`

const Expand = styled(IconButton)`
  width: 12px;
  margin-left: auto;
`

const FilterBox = styled.button`
  display: flex;
  flex: none;
  align-items: center;
  height: 26px;
  margin: 0 4px 0 3px;
  padding-left: 2px;
  border: 1px solid #bbb;

  ${Caret} {
    margin-top: 8px;
  }
`

const TreeBody = styled.div`
  display: flex;
  flex: 1;
  min-height: 0;
`

const TreeList = styled.ul`
  flex: 1;
  padding-top: 1px;
  overflow: hidden;
`

const TreeItem = styled.li`
  display: flex;
  align-items: center;
  height: 22px;
  padding-left: ${(p) => [2, 6, 29][p.$level]}px;
`

const Arrow = styled.span`
  flex: none;
  width: 18px;
  height: 8px;

  &::before {
    content: '';
    display: ${(p) => (p.$state ? 'block' : 'none')};
    width: 0;
    border: 4px solid transparent;
    border-left: 5px solid #666;
    border-right-width: 0;
    transform: ${(p) => (p.$state === 'open' ? 'rotate(90deg)' : 'none')};
  }
`

const TreeLabel = styled.button`
  display: flex;
  align-items: center;
  gap: 4px;
  white-space: pre;
`

const Angle = styled.span`
  font-family: "DejaVu Sans", sans-serif;
  font-size: 11px;
`

const tree = [
  [0, '', 'assembly', '装配体1  (默认<默认_显示状态-1>)'],
  [1, 'closed', 'history', 'History'],
  [1, '', 'sensor', '传感器'],
  [1, 'closed', 'notes', '注解'],
  [1, '', 'plane', '前视基准面'],
  [1, '', 'plane', '上视基准面'],
  [1, '', 'plane', '右视基准面'],
  [1, '', 'origin', '原点'],
  [1, 'closed', 'part', '(-) 推针<1> (默认<<默认>_显示状态'],
  [1, 'closed', 'part', '(-) 拉柄<1> (默认<<默认>_显示状态'],
  [1, 'closed', 'part', '(-) 连杆<1> (默认<<默认>_显示状态'],
  [1, 'closed', 'part', '座<1> (默认<<默认>_显示状态 1>)'],
  [1, 'closed', 'part', '4.5管<1> (默认<<默认>_显示状态 1'],
  [1, 'closed', 'part', '阀体<1> (默认<<默认>_显示状态 1'],
  [1, 'closed', 'part', '(-) 阀芯阀杆<1> (默认<<默认>_显示'],
  [1, 'closed', 'part', '(-) 气室<1> (默认<<默认>_显示状态'],
  [1, 'open', 'part', '扳机位<1> (默认<<默认>_显示状态'],
  [2, 'closed', 'mates', '装配体1 中的配合'],
  [2, 'closed', 'history', 'History'],
  [2, '', 'sensor', '传感器'],
  [2, 'closed', 'notes', '注解'],
]

const ScrollY = styled.div`
  display: flex;
  flex: none;
  flex-direction: column;
  align-items: center;
  width: 13px;
  margin-right: 2px;
  padding: 7px 0 6px;
  background: #ececec;

  ${Caret}:first-child {
    transform: rotate(180deg);
  }
  ${Caret}:last-child {
    margin-top: auto;
  }
`

const ScrollX = styled.div`
  display: flex;
  flex: none;
  align-items: center;
  height: 16px;
  padding: 0 20px 0 6px;
  background: #ececec;

  ${Caret}:first-child {
    transform: rotate(90deg);
  }
  ${Caret}:last-child {
    margin-left: auto;
    transform: rotate(-90deg);
  }
`

const Thumb = styled.span`
  display: flex;
  flex: none;
  align-items: center;
  justify-content: center;
  width: ${(p) => (p.$across ? '172px' : '100%')};
  height: ${(p) => (p.$across ? '14px' : '106px')};
  margin: ${(p) => (p.$across ? '0 0 0 5px' : '8px 0 0')};
  border: 1px solid #999;
  background: linear-gradient(${(p) => (p.$across ? 180 : 90)}deg, #f6f6f6, #c9c9c9);

  &::before {
    content: '';
    width: 7px;
    height: 7px;
    background: repeating-linear-gradient(${(p) => (p.$across ? 90 : 180)}deg, #555 0 1px, transparent 1px 3px);
  }
`

const FeatureTree = () => (
  <TreePanel>
    <PanelHandle><Dot /></PanelHandle>
    <TreeTabs>
      <TreeTab aria-label="设计树"><Icon name="assembly" /></TreeTab>
      <TreeTab aria-label="属性"><Icon name="list" size={20} /></TreeTab>
      <TreeTab aria-label="配置"><Icon name="treeConfig" size={20} /></TreeTab>
      <TreeTab aria-label="尺寸专家"><Icon name="target" size={20} /></TreeTab>
      <TreeTab aria-label="外观"><Icon name="ball" size={22} /></TreeTab>
      <Expand aria-label="更多标签">
        <Glyph viewBox="0 0 20 20" $size={14}><path d="M6 4l7 6-7 6" fill="none" stroke="#333" strokeWidth="2.500" /></Glyph>
      </Expand>
    </TreeTabs>
    <FilterBox aria-label="过滤"><Icon name="funnel" size={20} /><Caret /></FilterBox>
    <TreeBody>
      <TreeList>
        {tree.map(([level, state, icon, label], i) => (
          <TreeItem key={i} $level={level}>
            {level > 0 && <Arrow $state={state} />}
            <TreeLabel>
              <Icon name={icon} size={level ? 20 : 18} />
              <span>{label.split(/([<>]+)/).map((s, k) => (k % 2 ? <Angle key={k}>{s}</Angle> : s))}</span>
            </TreeLabel>
          </TreeItem>
        ))}
      </TreeList>
      <ScrollY><Caret /><Thumb /><Caret /></ScrollY>
    </TreeBody>
    <ScrollX><Caret /><Thumb $across /><Caret /></ScrollX>
  </TreePanel>
)

/* ---------- graphics area ---------- */

const Viewport = styled.section`
  position: relative;
  display: flex;
  flex: 1;
  flex-direction: column;
  min-width: 0;
  background:
    linear-gradient(180deg, transparent 53%, rgba(255, 255, 255, 0.8) 64%, #fff 75%, #fbfbfc),
    radial-gradient(ellipse 75% 62% at 12% 0%, #fff 35%, transparent),
    linear-gradient(180deg, #e0e3eb, #dadde7 30%, #e0e2ec 60%);
`

const Scene = styled.svg`
  flex: 1;
  min-height: 0;
  width: 100%;
`

const BottomStrip = styled.div`
  flex: none;
  height: 14px;
  margin-right: 3px;
  border: solid #888;
  border-width: 1px 1px 0 0;
  background: #f5f5f6;
`

const HeadsUp = styled.div`
  position: absolute;
  top: 3px;
  left: 0;
  right: 4px;
  display: flex;
  justify-content: center;
`

const Splitter = styled.button`
  position: absolute;
  top: 241px;
  left: -1px;
  display: flex;
  align-items: center;
  justify-content: center;
  width: 9px;
  height: 39px;
  border: 1px solid #aaa;
  border-left: 0;
  background: #f7f7f7;
`

const TaskTabs = styled.div`
  position: absolute;
  top: 22px;
  right: 0;
  width: 26px;
  border: solid #888;
  border-width: 1px 0 0 1px;
`

const TaskTab = styled(IconButton)`
  width: 25px;
  border-bottom: 1px solid #888;
  background: #d3d3d3;

  &:first-child {
    background: #f7f7f7;
  }
`

const Watermark = styled.text`
  font-family: "Liberation Serif", serif;
  font-size: 54px;
  fill: #e8e8ea;
  stroke: #6b6b70;
  stroke-width: 0.4px;
  filter: drop-shadow(1px 1px 0 #777);

  tspan {
    font-family: "Noto Sans CJK SC", sans-serif;
    font-weight: 300;
  }
`

const headsUp = [
  ['zoomFit'], ['zoomArea'], ['prevView'], ['sectionView'], ['sketchView'], ['orient', 1],
  ['display', 1], ['eye', 1], ['paint'], ['scene', 1], ['screen', 1],
]

const Model = () => (
  <Scene viewBox="263 168 795 526" role="img" aria-label="装配体1">
    <defs>
      <linearGradient id="tubeA" gradientUnits="userSpaceOnUse" x1="780" y1="338" x2="784" y2="364">
        <stop offset="0" stopColor="#9a9a9a" /><stop offset=".35" stopColor="#d0d0d0" />
        <stop offset=".75" stopColor="#4d4c4e" /><stop offset="1" stopColor="#3a393b" />
      </linearGradient>
      <linearGradient id="tubeB" gradientUnits="userSpaceOnUse" x1="780" y1="364" x2="786" y2="405">
        <stop offset="0" stopColor="#858586" /><stop offset=".25" stopColor="#b9b9b9" />
        <stop offset=".65" stopColor="#4f4e50" /><stop offset="1" stopColor="#545356" />
      </linearGradient>
      <linearGradient id="shine" gradientUnits="userSpaceOnUse" x1="575" y1="0" x2="975" y2="0">
        <stop offset="0" stopColor="#fff" stopOpacity=".3" /><stop offset=".3" stopColor="#000" stopOpacity=".15" />
        <stop offset=".6" stopColor="#fff" stopOpacity=".05" /><stop offset="1" stopColor="#fff" stopOpacity=".05" />
      </linearGradient>
      <linearGradient id="bevel" x1="0" y1="0" x2="1" y2="0.300">
        <stop offset="0" stopColor="#7d7635" /><stop offset=".5" stopColor="#aaa456" /><stop offset="1" stopColor="#6e672c" />
      </linearGradient>
      <linearGradient id="bolt" x1="0" y1="0" x2="0" y2="1">
        <stop offset="0" stopColor="#888" /><stop offset=".4" stopColor="#f3f3f3" /><stop offset="1" stopColor="#777" />
      </linearGradient>
      <linearGradient id="ground" gradientUnits="userSpaceOnUse" x1="305" y1="0" x2="1030" y2="0">
        <stop offset="0" stopColor="#555" stopOpacity=".45" /><stop offset=".15" stopColor="#444" stopOpacity=".85" />
        <stop offset=".85" stopColor="#444" stopOpacity=".8" /><stop offset="1" stopColor="#555" stopOpacity=".25" />
      </linearGradient>
      <filter id="soft" x="-10%" y="-50%" width="120%" height="200%"><feGaussianBlur stdDeviation="2.200" /></filter>
      <filter id="softer" x="-30%" y="-80%" width="160%" height="260%"><feGaussianBlur stdDeviation="4" /></filter>
    </defs>

    {/* ground shadow */}
    <path d="M308 640l92-14 8 3-78 13Z" fill="#666" opacity=".6" filter="url(#softer)" />
    <path d="M304 635L420 615 700 579 1012 541 1022 542 700 587 420 624 306 640Z" fill="url(#ground)" filter="url(#soft)" />

    {/* barrel and reservoir */}
    <g stroke="#161616" strokeWidth="1">
      <path d="M576 391L957 339c7 5 9 30 6 40L660 421 578 416Z" fill="url(#tubeB)" />
      <path d="M574 367L973 311c4 4 5 20 4 25L577 391Z" fill="url(#tubeA)" />
      <path d="M957 339c5 8 7 28 4 40M973 311c3 6 4 18 2 25" fill="none" strokeWidth="2" />
      <path d="M574 367L973 311c4 4 5 20 4 25l-16 3 2 40L660 421l-82-6Z" fill="url(#shine)" stroke="none" />
    </g>

    {/* receiver */}
    <g stroke="#121212" strokeWidth="1.200" strokeLinejoin="round">
      <path d="M338 394l2-3 33-4 3-6 88-13 41-5 52-7 10 2 8 9 4 47-227 31-9-5-1-20-5-26Z" fill="#3b3a3e" />
      <path d="M376 382l90-14 36-5 6 2-36 6-90 14-10 3Z" fill="#1c1c20" />
      <path d="M341 395l35-5 84-13v7l-84 12-33 5Z" fill="#555458" />
      <path d="M344 403l108-16v12l-90 15-16 2Z" fill="#27262a" />
      <path d="M428 398l24-4v9l-24 4Z" fill="#3f3e42" />
      <path d="M358 411l42-12 2 4-42 12Z" fill="#d5d5d7" stroke="#666" />
      <path d="M400 398l26-3c3 2 3 7 1 9l-27 3Z" fill="url(#bolt)" stroke="#777" />
      <path d="M459 378l8-1 4 28-8 2Z" fill="#4d4c52" />
      <path d="M468 371l10-1v33l-8 1Z" fill="#222225" />
      <path d="M479 367l20-2v31l-20 3Z" fill="#f4f4f7" />
      <path d="M500 366l10-1 6 32-15 2Z" fill="#222225" />
      <path d="M514 372c8-4 13 0 13 8v16l-11 1Z" fill="url(#bolt)" />
      <path d="M529 361l28-4 12 7-38 5Z" fill="#2a292d" />
      <path d="M341 420l9-1 2 26-9-4Z" fill="#1c1c1f" />
      <ellipse cx="348" cy="438" rx="3" ry="6" fill="#f1f1f1" />
    </g>

    {/* cocking lever */}
    <g stroke="#5c0505" strokeWidth="1.200" strokeLinejoin="round">
      <path d="M315 420l8-3 6-8 5-3 10 0 18 4 2 9-20 3-8 4-7 4-3 4-11 2Z" fill="#c3191c" />
      <path d="M315 420l12-3 3 4-1 13-12 2ZM327 417l6-9 8-2-2 8-9 7" fill="#e0312c" />
      <path d="M345 414l15-2 1 4-14 3Z" fill="#f3cfcf" />
    </g>

    {/* grip */}
    <g stroke="#14120a" strokeWidth="1.500" strokeLinejoin="round">
      <path
        d="M352 446L656 405l3 20c0 12-2 20-9 25l-67 12c-10 0-12-1-20 2-14 5-26 16-32 27l-10 22c-3 8-8 10-16 11l-33 4c-10-1-16-7-23-12-5-3-10-3-16-2-4 1-7 4-8 9l-18 83 2 16-6 6-70-4-29-14-2-15 39-86-18-43 8-22Z"
        fill="#5e5423" fillRule="evenodd"
      />
      <path d="M332 443l14 3-8 22-15 0ZM323 467l15 0 20 33 1 12-8 15-10 20-19 61-17-4-2-12 39-87Z" fill="url(#bevel)" />
      <path d="M329 473l20 31-8 0Z" fill="#4f481e" />
      <path d="M350 499l10 4M342 506l17 4M341 513l17 6M340 520l15 5M327 542l16 5M334 544l-22 56M350 519l-16 25M303 595l16 3M319 598l-1 14M303 604l31 16 70 3 4-19" fill="none" strokeWidth="1.200" />
      <path d="M656 405l3 20c0 12-2 20-9 25l-67 12-14-1-12-6-12-2-80 12c-13 3-25 12-28 24-4 10-5 22-3 30" fill="none" strokeWidth="2" />
      <path d="M654 406l1 26c-2 6-5 10-12 12l-60 12-20-8c-8-2-12-3-20-1l-78 13c-16 3-28 15-31 28-2 8-2 16 0 24" fill="none" strokeWidth="1.200" />
      <path d="M657 406l2 20c0 11-2 18-9 23" fill="none" stroke="#8b7b62" strokeWidth="2.500" />
      <path d="M462 464c-17 4-27 11-32 25-3 9-4 16-2 23" fill="none" stroke="#7c6e4c" strokeWidth="3" />
      <path d="M463 463l80-13c12-1 20 6 34 9" fill="none" stroke="#6a5d2e" strokeWidth="3" />
      <path d="M424 523l-18 80" fill="none" stroke="#8a7d5c" strokeWidth="3" />
    </g>

    {/* trigger guard */}
    <g stroke="#14120a" strokeWidth="1.500">
      <path d="M457 499c0-9 5-17 13-20l31-4c9 0 20 6 21 17 0 11-5 23-13 28l-34 4c-10 0-18-14-18-25Z" fill="#a09a48" />
      <path d="M461 499c1-9 5-15 11-17l29-4c7 1 12 8 11 16l-8 18-30 3c-8 0-13-8-13-16Z" fill="#fff" />
      <path d="M464 487c2-4 6-6 12-5-4 9-4 19 2 30l-5 4c-6-7-9-16-9-29Z" fill="#8f8b1d" />
      <path d="M474 514l30-3 8-8M470 519l4-5M504 511l4 6" fill="none" strokeWidth="1.200" />
    </g>

    {/* axis triad */}
    <g fontFamily="Liberation Serif" fontSize="11">
      <path d="M304 635l-17 3" stroke="#d32020" strokeWidth="3" />
      <path d="M275 640l13-6 1 8Z" fill="#d32020" />
      <path d="M304 635l-2-18" stroke="#1d8a34" strokeWidth="3" />
      <path d="M301 606l5 12-8 1Z" fill="#1d8a34" />
      <path d="M294 629l10 2v6l-8-1Z" fill="#2234d0" />
      <text x="266" y="644" fill="#c42020">X</text>
      <text x="296" y="605" fill="#1d6a30">Y</text>
      <text x="291" y="635" fill="#2234d0">Z</text>
    </g>

    <Watermark x="409" y="381"><tspan>莫西网</tspan>www.3dmox.com</Watermark>
  </Scene>
)

const GraphicsArea = () => (
  <Viewport>
    <Model />
    <BottomStrip />
    <HeadsUp>
      {headsUp.map(([name, drop]) => (
        <React.Fragment key={name}>
          <IconButton $width={26} aria-label={name}><Icon name={name} size={20} /></IconButton>
          {drop && <IconButton $width={14} aria-label={name + ' 选项'}><Caret $color="#888" /></IconButton>}
        </React.Fragment>
      ))}
    </HeadsUp>
    <Splitter aria-label="折叠面板"><Dot /></Splitter>
    <TaskTabs>
      {['home', 'books', 'folderOpen', 'palette', 'ball', 'list', 'chat'].map((name) => (
        <TaskTab key={name} aria-label={name}><Icon name={name} size={20} /></TaskTab>
      ))}
    </TaskTabs>
  </Viewport>
)

/* ---------- task pane ---------- */

const TaskPane = styled.aside`
  position: relative;
  display: flex;
  flex: none;
  width: 304px;
  border-left: 1px solid #777;
  border-bottom: 1px solid #3a6ea5;
  color: #444;
`

const PaneBody = styled.div`
  flex: 1;
  padding: 1px 14px 0 13px;
  overflow: hidden;
`

const PaneSection = styled.section`
  min-height: 48px;
  padding: 0 2px 0 3px;
  border-top: 1px solid #777;
`

const PaneHeading = styled.h2`
  display: flex;
  align-items: center;
  justify-content: space-between;
  height: 22px;
  margin: 0;
  padding-right: 4px;
  font-size: 11px;
`

const Chevron = ({ up }) => (
  <Glyph viewBox="0 0 20 20" $size={14} aria-hidden="true">
    <path d={up ? 'M3 13l7-7 7 7' : 'M3 7l7 7 7-7'} fill="none" stroke="#555" strokeWidth="2.200" />
  </Glyph>
)

const PaneLink = styled.a`
  display: flex;
  align-items: center;
  height: ${(p) => (p.$short ? 24 : 28)}px;
  margin-left: -1px;
  gap: ${(p) => (p.$short ? 2 : 4)}px;
  font-size: 11px;
`

const NewsList = styled.ul`
  display: flex;
  flex-direction: column;
  padding: 5px 0 4px 20px;
  gap: 3px;
  font-size: 11px;
  line-height: 13px;

  a {
    display: flex;
    align-items: center;
    gap: 3px;
  }
  a::before {
    content: '';
    width: 4px;
    height: 4px;
    margin-left: -1px;
    border: solid #e07b2c;
    border-width: 1px 1px 0 0;
    transform: rotate(45deg);
  }
`

const FadeRule = styled.hr`
  width: 120px;
  height: 1px;
  margin: 0 0 3px 26px;
  border: 0;
  background: linear-gradient(90deg, #999 60%, transparent);
`

const Spacer = styled.div`
  height: 26px;
`

const PaneScroll = styled.div`
  display: flex;
  flex: none;
  flex-direction: column;
  align-items: center;
  width: 10px;
  padding: 14px 0 8px;
  border-left: 1px solid #999;
  background: #eee;

  ${Thumb} {
    flex: 0 1 346px;
    margin: 0 0 auto;
  }
`

const UploadBadge = styled.button`
  position: absolute;
  top: -4px;
  right: 63px;
  display: flex;
  width: 105px;
  height: 25px;
  border: 1px solid #3c9de8;
  border-radius: 3px;
  overflow: hidden;
  background: linear-gradient(#e2f6ff, #a9e0fb);
  color: #3f96dc;
  line-height: 23px;

  svg {
    width: 30px;
    height: 23px;
    background: #2b9cf3;
  }
  span {
    flex: 1;
  }
`

const CapsBadge = styled.div`
  position: absolute;
  right: 20px;
  bottom: 26px;
  width: 74px;
  height: 69px;
  border-radius: 6px;
  background: #000;
`

const CapsTip = styled.div`
  position: absolute;
  right: 7px;
  bottom: 1px;
  padding: 0 6px;
  border: solid #888;
  border-width: 0 1px 1px 0;
  background: #ece9dc;
  color: #000;
  font: 500 15px/19px "Noto Sans CJK SC", sans-serif;
`

const news = [
  'SOLIDWORKS 2020 Beta1 is available for download',
  'SolidPractices are now available to all custo...',
  'SOLIDWORKS 2019 SP3 is available for download',
  'SOLIDWORKS 2019 SP2 is available for download',
  'SOLIDWORKS Customer Portal and Admin Portal M...',
  'SOLIDWORKS Customer Portal and Admin Portal M...',
  'SOLIDWORKS 2019 SP1 is available for download',
]

const ResourcePane = () => (
  <TaskPane>
    <PaneBody>
      <PaneSection><PaneHeading>开始<Chevron /></PaneHeading></PaneSection>
      <PaneSection><PaneHeading>SOLIDWORKS 工具<Chevron /></PaneHeading></PaneSection>
      <PaneSection>
        <PaneHeading>社区<Chevron up /></PaneHeading>
        <PaneLink href="#"><Icon name="portal" size={20} />客户门户</PaneLink>
        <PaneLink href="#"><Icon name="people" size={20} />用户组</PaneLink>
        <PaneLink href="#"><Icon name="chat" size={20} />探讨论坛</PaneLink>
        <PaneLink href="#" $short><Icon name="rss" />技术警戒和新闻</PaneLink>
        <NewsList>
          {news.map((n, i) => <li key={i}><a href="#"><span>{n}</span></a></li>)}
        </NewsList>
        <FadeRule />
        <NewsList><li><a href="#"><span>全部查看</span></a></li></NewsList>
        <Spacer />
      </PaneSection>
      <PaneSection>
        <PaneHeading>在线资源</PaneHeading>
        <PaneLink href="#"><Icon name="handshake" size={20} />Partner Solutions(解决方案)</PaneLink>
        <PaneLink href="#"><Icon name="handshake" size={20} />制造商</PaneLink>
      </PaneSection>
    </PaneBody>
    <PaneScroll><Thumb /><Caret /></PaneScroll>
    <UploadBadge>
      <svg viewBox="0 0 30 23" aria-hidden="true">
        <g fill="none" stroke="#fff" strokeWidth="2.500">
          <circle cx="15" cy="7.500" r="3.500" /><circle cx="10" cy="14" r="3.500" /><circle cx="20" cy="14" r="3.500" />
        </g>
      </svg>
      <span>拖拽上传</span>
    </UploadBadge>
    <CapsBadge>
      <svg viewBox="0 0 74 69" aria-hidden="true">
        <path d="M37 18L21 40h6l-1 4h-5v10h33M37 18l18 23h-6l3 5" fill="none" stroke="#fff" strokeWidth="3.500" />
        <text x="30" y="48" fontSize="17" fontWeight="bold" fontFamily="Liberation Sans" fill="#fff">A</text>
        <path d="M18 16l38 38" stroke="#fff" strokeWidth="3.500" />
      </svg>
    </CapsBadge>
    <CapsTip>大写锁定: 关</CapsTip>
  </TaskPane>
)

/* ---------- status bar ---------- */

const StatusBar = styled.footer`
  display: flex;
  flex: none;
  height: 15px;
  padding-top: 2px;
  overflow: hidden;
  line-height: 18px;
  white-space: nowrap;
`

const StatusCell = styled.span`
  flex: none;
  display: flex;
  align-items: center;
  height: 18px;
  width: ${(p) => p.$width}px;
  padding: 0 4px;
  gap: 18px;
  border-right: ${(p) => (p.$last ? 0 : 1)}px solid #c8c8c8;

  ${Caret} {
    transform: rotate(180deg);
  }
`

const StatusText = styled.span`
  flex: 1;
`

const App = () => (
  <Page>
    <GlobalStyle />
    <TitleRow />
    <ToolRow>
      <Strip items={stripOne} width={27} size={20} />
      <Strip items={stripTwo} width={26} size={18} />
    </ToolRow>
    <RibbonRow />
    <TabBar>
      {tabs.map(([label, width]) => (
        <Tab key={label} $width={width} $active={label === 'SolidCAM 3D 加工'}>{label}</Tab>
      ))}
    </TabBar>
    <Main>
      <FeatureTree />
      <GraphicsArea />
      <ResourcePane />
    </Main>
    <StatusBar>
      <StatusText>SOLIDWORKS Premium 2016 x64 版</StatusText>
      <StatusCell $width={47}>欠定义</StatusCell>
      <StatusCell $width={7} />
      <StatusCell $width={87}>在编辑 装配体</StatusCell>
      <StatusCell $width={16} />
      <StatusCell $width={25} $last />
      <StatusCell $width={128} $last>自定义<Caret /></StatusCell>
      <Icon name="tag" size={16} />
    </StatusBar>
  </Page>
)

export default App
